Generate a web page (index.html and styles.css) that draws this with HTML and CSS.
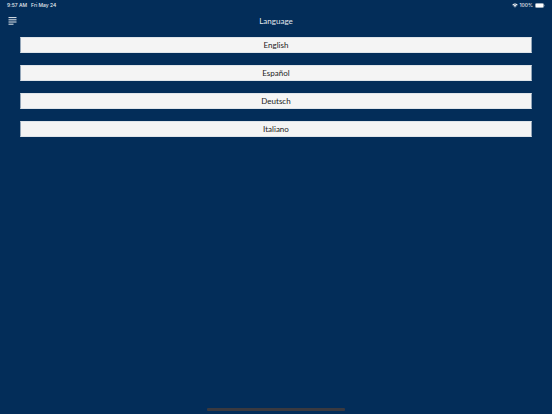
FILE: index.html
```html
<!DOCTYPE html>
<html lang="en">
<head>
  <meta charset="UTF-8">
  <meta name="viewport" content="width=device-width, initial-scale=1.0">
  <title>Language</title>
  <link rel="stylesheet" href="styles.css">
</head>
<body>
  <!-- Status bar -->
  <div class="status-bar">
    <div class="status-group status-left">
      <span>9:57 AM</span>
      <span>Fri May 24</span>
    </div>
    <div class="status-group">
      <svg class="wifi" viewBox="0 0 12 10" aria-hidden="true">
        <path d="M0.6 3.5 Q6 -1.5 11.4 3.5 L10.2 4.8 Q6 0.9 1.8 4.8 Z"/>
        <path d="M2.6 5.5 Q6 2.4 9.4 5.5 L8.2 6.8 Q6 4.8 3.8 6.8 Z"/>
        <path d="M4.4 7.4 Q6 6 7.6 7.4 L6 9.2 Z"/>
      </svg>
      <span>100%</span>
      <svg class="battery" viewBox="0 0 20 10" aria-hidden="true">
        <rect class="battery-shell" x="0.5" y="0.5" width="17" height="9" rx="2.5"/>
        <rect x="1" y="1" width="16" height="8" rx="2"/>
        <path d="M18.5 3.5 Q20 5 18.5 6.5 Z"/>
      </svg>
    </div>
  </div>

  <header class="nav-bar">
    <button class="menu-button" type="button" aria-label="Menu">
      <svg viewBox="0 0 9 8" aria-hidden="true">
        <path d="M0.5 0.6 H8.5 M0.5 2.8 H8.5 M0.5 5 H8.5 M0.5 7.2 H5.5"/>
      </svg>
    </button>
    <h1>Language</h1>
  </header>

  <!-- Language choices -->
  <main class="language-list">
    <button class="language-button" type="button">English</button>
    <button class="language-button" type="button">Español</button>
    <button class="language-button" type="button">Deutsch</button>
    <button class="language-button" type="button">Italiano</button>
  </main>

  <div class="home-indicator"></div>
</body>
</html>
```

FILE: styles.css
```css
/* General styles */
* {
  box-sizing: border-box;
}

body {
  display: flex;
  flex-direction: column;
  min-height: 100vh;
  margin: 0;
  background-color: #032d59;
  color: #e4e9ee;
  font-family: Lato, "Liberation Sans", sans-serif;
}

/* Status bar */
.status-bar {
  display: flex;
  justify-content: space-between;
  height: 10px;
  padding: 0 7px;
  font-family: Inter, "Liberation Sans", sans-serif;
  font-size: 5px;
  font-weight: 500;
  line-height: 10px;
}

.status-group {
  display: flex;
  align-items: center;
  gap: 2px;
}

.status-left {
  gap: 4px;
}

.status-group svg {
  fill: #ffffff;
}

.wifi {
  width: 6px;
  height: 5px;
}

.battery {
  width: 10px;
  height: 5px;
}

.battery-shell {
  fill: none;
  stroke: #8c9fb3;
}

/* Title row */
.nav-bar {
  display: grid;
  grid-template-columns: 25px 1fr 25px;
  align-items: center;
  height: 22px;
}

.nav-bar h1 {
  margin: 0;
  font-size: 8px;
  font-weight: 400;
  line-height: 10px;
  text-align: center;
}

.menu-button {
  display: flex;
  justify-content: center;
  padding: 0;
  border: 0;
  background: none;
  cursor: pointer;
}

.menu-button svg {
  width: 9px;
  height: 8px;
  fill: none;
  stroke: #e4e9ee;
  stroke-width: 1;
}

/* Language buttons */
.language-list {
  display: flex;
  flex: 1;
  flex-direction: column;
  gap: 12px;
  padding: 5px 20px;
}

.language-button {
  height: 16px;
  padding: 0;
  border: 1px solid #93a5b8;
  border-top-color: #dfe4e9;
  border-bottom-color: #dfe4e9;
  background-color: #f4f4f4;
  color: #222222;
  font-family: inherit;
  font-size: 8px;
  line-height: 10px;
  cursor: pointer;
}

/* Home indicator */
.home-indicator {
  width: 25%;
  height: 3px;
  margin: 0 auto 3px;
  border-radius: 1px;
  background-color: #3a393f;
}
```
